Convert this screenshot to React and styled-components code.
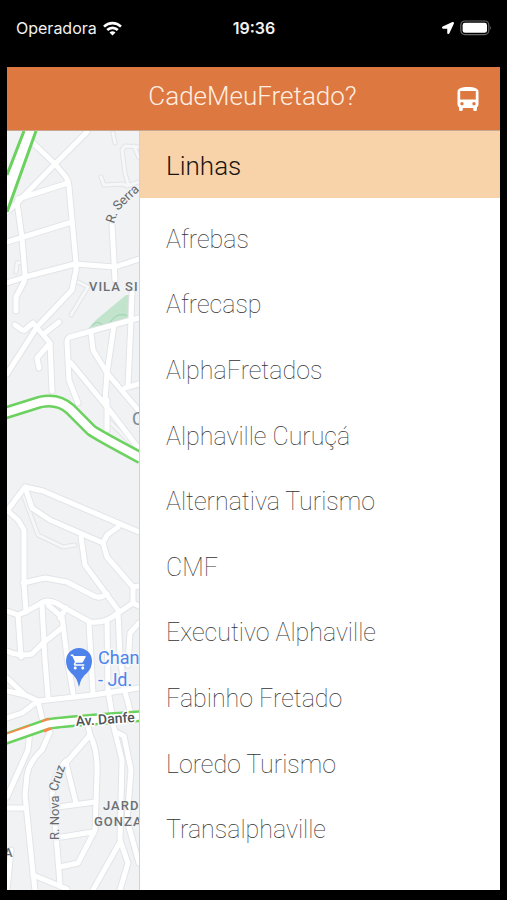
import React from 'react'
import styled, { createGlobalStyle } from 'styled-components'
import { FaLocationArrow } from 'react-icons/fa'
import { MdShoppingCart } from 'react-icons/md'

const GlobalStyle = createGlobalStyle`
    * {
        box-sizing: border-box;
    }

    body {
        margin: 0;
        background-color: black;
        font-family: Roboto, sans-serif;
    }
`

const StyledScreen = styled.div`
    display: flex;
    flex-direction: column;
    min-height: 100vh;
    padding: 0 7px 10px;
`

const StyledStatusBar = styled.div`
    display: grid;
    grid-template-columns: 1fr auto 1fr;
    align-items: center;
    height: 67px;
    padding: 0 8px 11px 9px;
    color: #f2f2f2;
    font-family: Inter, sans-serif;
    font-size: 16px;
    line-height: 20px;
`

const StyledStatusSide = styled.div`
    display: flex;
    align-items: center;
    justify-content: ${({ $end }) => ($end ? 'flex-end' : 'flex-start')};
    gap: 6px;
`

const StyledTime = styled.time`
    font-weight: 600;
`

const StyledHeader = styled.header`
    display: grid;
    grid-template-columns: 48px 1fr 48px;
    align-items: center;
    height: 64px;
    padding: 0 8px 0 0;
    background-color: #dc7840;
    border-bottom: 1px solid #c9a68f;
    color: #ffeee2;
`

const StyledTitle = styled.h1`
    margin: 0;
    padding: 0 0 6px 6px;
    font-size: 26px;
    font-weight: 300;
    line-height: 32px;
    text-align: center;
`

const StyledIconButton = styled.button`
    display: flex;
    justify-content: center;
    padding: 0;
    border: none;
    background: none;
    color: white;
    cursor: pointer;
`

const StyledContent = styled.div`
    display: flex;
    flex: 1;
    background-color: white;
`

const StyledMap = styled.svg`
    display: block;
    flex: none;
    width: 132px;
    background-color: #f0f2f4;
    font-family: Roboto, sans-serif;
`

const StyledDrawer = styled.nav`
    display: flex;
    flex: 1;
    flex-direction: column;
    border-left: 1px solid #d0d2d4;
`

const StyledDrawerTitle = styled.h2`
    margin: 0;
    padding: 19px 26px 16px;
    background-color: #f8d3aa;
    color: #1c1611;
    font-size: 26px;
    font-weight: 300;
    line-height: 32px;
`

const StyledList = styled.ul`
    display: flex;
    flex: 1;
    flex-direction: column;
    margin: 0;
    padding: 9px 0 27px;
    list-style: none;
`

const StyledItem = styled.li`
    display: flex;
    flex: 1;
`

const StyledLine = styled.button`
    flex: 1;
    padding: 0 26px;
    border: none;
    background: none;
    color: #333;
    font-family: inherit;
    font-size: 25px;
    font-weight: 100;
    line-height: 32px;
    text-align: left;
    cursor: pointer;
`

const lines = [
    'Afrebas',
    'Afrecasp',
    'AlphaFretados',
    'Alphaville Curuçá',
    'Alternativa Turismo',
    'CMF',
    'Executivo Alphaville',
    'Fabinho Fretado',
    'Loredo Turismo',
    'Transalphaville',
]

const lanes = [
    'M101 177L104 185L123 184L127 186L139 182',
    'M139 147L125 146L122 150L125 173L128 184',
    'M113 133L115 143',
    'M134 146L139 158',
    'M78 282L88 287L71 315',
    'M23 494L38 535L63 547L75 545',
    'M108 420L137 449',
    'M22 262L17 263L16 272',
]

const streets = [
    'M33 143L55 164L66 177Q69 182 69 187L76 263V270L72 290L37 327L7 374',
    'M87 132L55 164L17 203L7 212',
    'M68 183L18 199',
    'M17 202L22 238L25 275L24 282L16 297V311',
    'M7 242L72 222',
    'M7 283L25 277L75 264L115 267L139 259',
    'M112 225L115 280',
    'M15 325L22 330Q25 331 27 328L33 323L50 343L52 391',
    'M59 322L45 333',
    'M50 343L37 358L39 368',
    'M139 318L70 337Q67 338 67 342L69 380L78 403',
    'M132 293L131 320L128 386',
    'M91 333L93 350L107 373L139 411',
    'M114 325L107 373L105 400',
    'M107 400V430',
    'M71 363L107 407L139 449',
    'M139 384L125 388',
    'M7 511L25 487L43 491L139 532',
    'M25 487L32 508L50 520L103 543L107 535L118 527',
    'M8 511L18 520L24 530V583L26 612',
    'M81 537L85 565L118 610',
    'M103 543L107 557L133 587V603L118 613Q105 624 90 622L63 607Q48 597 40 604L25 612L18 615L7 611',
    'M23 583L45 578L67 582L94 596Q100 599 107 594',
    'M133 587L139 586',
    'M133 603L139 606',
    'M18 615L21 657',
    'M42 605L45 660L48 697',
    'M48 605L62 617L67 657L73 693',
    'M60 618L66 608',
    'M89 623L93 693',
    'M107 620L108 690L112 714',
    'M118 613L120 655L125 692L130 710',
    'M63 627L43 643L32 654Q20 657 7 651',
    'M139 623L130 633L128 665',
    'M7 678L25 695L38 701L93 695L139 688',
    'M7 718L22 713L38 701',
    'M7 691L25 695',
    'M38 701L42 718',
    'M30 730L28 750L7 797',
    'M50 732L42 750Q29 762 27 775L25 795L33 873L35 890',
    'M87 722L90 735L66 763L76 803',
    'M66 761Q53 774 52 795L56 835L60 884',
    'M90 735Q98 750 97 775L95 830L78 863L60 867',
    'M58 807L95 802',
    'M55 838L93 832',
    'M33 875L67 889',
    'M112 720L122 760L120 840L128 863L120 890',
    'M118 733L124 736L131 770L127 820L139 863',
    'M120 842L93 890',
    'M7 808H25',
    'M11 850L7 890',
]

const Streets = ({ paths, casing, fill }) => (
    <g fill='none' strokeLinejoin='round' strokeLinecap='round'>
        {paths.map((d) => (
            <path key={`case-${d}`} d={d} stroke='#e2e4e7' strokeWidth={casing} />
        ))}
        {paths.map((d) => (
            <path key={d} d={d} stroke={fill} strokeWidth={casing - 2} />
        ))}
    </g>
)

const BusIcon = () => (
    <svg width='22' height='26' viewBox='0 0 22 26' aria-hidden='true'>
        <path
            fill='currentColor'
            fillRule='evenodd'
            d='M0.5 6C0.5 2.5 4 1 11 1S21.5 2.5 21.5 6V18.5Q21.5 20.3 20 21.2V23.4Q20 25 18.4 25H17.8Q16.2 25 16.2 23.4V22H5.8V23.4Q5.8 25 4.2 25H3.6Q2 25 2 23.4V21.2Q0.5 20.3 0.5 18.5ZM3.2 5V13.6H18.8V5ZM5 16A1.7 1.7 0 1 0 5 19.4A1.7 1.7 0 1 0 5 16ZM17 16A1.7 1.7 0 1 0 17 19.4A1.7 1.7 0 1 0 17 16Z'
        />
    </svg>
)

const WifiIcon = () => (
    <svg width='19' height='15' viewBox='0 0 19 15' fill='none' stroke='white' strokeWidth='2.6' aria-hidden='true'>
        <path d='M1 5.6C5.8 1 13.2 1 18 5.6' />
        <path d='M4.2 9C7.2 6.1 11.8 6.1 14.8 9' />
        <path d='M9.5 14.6L6.5 11.6Q9.5 9 12.5 11.6Z' fill='white' stroke='none' />
    </svg>
)

const BatteryIcon = () => (
    <svg width='32' height='16' viewBox='0 0 32 16' aria-hidden='true'>
        <rect x='0.8' y='1' width='28' height='13.6' rx='4' fill='none' stroke='#666' strokeWidth='1.2' />
        <rect x='2.6' y='2.8' width='24.4' height='10' rx='2.4' fill='white' />
        <path d='M30.2 5.6Q32 7.8 30.2 10Z' fill='#666' />
    </svg>
)

const StatusBar = () => (
    <StyledStatusBar>
        <StyledStatusSide>
            <span>Operadora</span>
            <WifiIcon />
        </StyledStatusSide>
        <StyledTime>19:36</StyledTime>
        <StyledStatusSide $end>
            <FaLocationArrow size={12} color='white' />
            <BatteryIcon />
        </StyledStatusSide>
    </StyledStatusBar>
)

const Map = () => (
    <StyledMap viewBox='7 131 132 759' preserveAspectRatio='xMinYMin slice' role='img' aria-label='Mapa'>
        <path d='M85 332L96 320L126 295L129 295L130 317Z' fill='#c2e4cd' />
        <path d='M92 326Q96 320 101 324T112 320T128 316' fill='none' stroke='#a3d6b4' strokeWidth='1.2' />
        <Streets paths={lanes} casing={5} fill='#f6f7f8' />
        <Streets paths={streets} casing={7} fill='white' />

        <path d='M24 131L7 177V213L37 131Z' fill='white' />
        <path d='M24 131L7 175M36 131L7 212' fill='none' stroke='#6bd15f' strokeWidth='3' />

        <path d='M5 413L40 402Q58 398 70 409L91 430Q96 434 141 458' fill='none' stroke='#6bd15f' strokeWidth='13' />
        <path d='M5 413L40 402Q58 398 70 409L91 430Q96 434 141 458' fill='none' stroke='white' strokeWidth='8' />

        <path d='M5 739L48 724Q55 722 141 716' fill='none' stroke='#6bd15f' strokeWidth='12' />
        <path d='M5 735L30 726M42 722L49 719M44 731L51 728' fill='none' stroke='#f58a4b' strokeWidth='3' />
        <path d='M5 739L48 724Q55 722 141 716' fill='none' stroke='white' strokeWidth='7' />

        <g fill='#66696d' stroke='#f0f2f4' strokeWidth='3' paintOrder='stroke' fontSize='13'>
            <text transform='translate(114 224) rotate(-72)'>R.</text>
            <text transform='translate(118 211) rotate(-44)'>Serra</text>
            <text transform='translate(59 840) rotate(-90)'>R. Nova</text>
            <text transform='translate(57 792) rotate(-72)'>Cruz</text>
        </g>
        <g fill='#6c7075' fontSize='13' fontWeight='500' letterSpacing='1'>
            <text x='89' y='291'>VILA SI</text>
            <text x='103' y='810'>JARD</text>
            <text x='94' y='826'>GONZA</text>
            <text x='4' y='857'>A</text>
        </g>
        <text x='132' y='425' fill='#7a8a90' fontSize='18'>C</text>
        <text transform='translate(76 726) rotate(-4)' fill='#505356' stroke='white' strokeWidth='3' paintOrder='stroke' fontSize='14' fontWeight='500'>
            Av. Danfe
        </text>

        <path d='M79 687Q77 677 71 673Q66 668 66 661A13 13 0 0 1 92 661Q92 668 87 673Q81 677 79 687Z' fill='#4f83ec' />
        <MdShoppingCart x='70' y='653' size={18} color='white' />
        <g fill='#4f83ec' stroke='#f6f7f8' strokeWidth='3' paintOrder='stroke' fontSize='18'>
            <text x='98' y='664'>Chan</text>
            <text x='98' y='686'>- Jd.</text>
        </g>
    </StyledMap>
)

const LinesDrawer = () => (
    <StyledDrawer aria-label='Linhas'>
        <StyledDrawerTitle>Linhas</StyledDrawerTitle>
        <StyledList>
            {lines.map((line) => (
                <StyledItem key={line}>
                    <StyledLine type='button'>{line}</StyledLine>
                </StyledItem>
            ))}
        </StyledList>
    </StyledDrawer>
)

const App = () => {
    return (
        <>
            <GlobalStyle />
            <StyledScreen>
                <StatusBar />
                <StyledHeader>
                    <span />
                    <StyledTitle>CadeMeuFretado?</StyledTitle>
                    <StyledIconButton type='button' aria-label='Linhas'>
                        <BusIcon />
                    </StyledIconButton>
                </StyledHeader>
                <StyledContent>
                    <Map />
                    <LinesDrawer />
                </StyledContent>
            </StyledScreen>
        </>
    )
}

export default App
